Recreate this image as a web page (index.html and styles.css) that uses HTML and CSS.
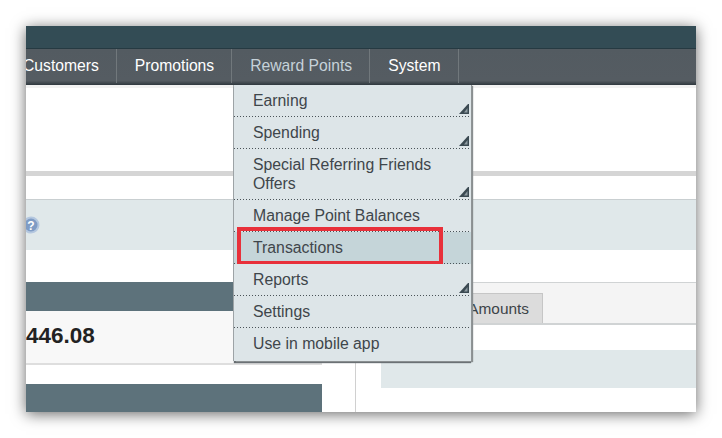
FILE: index.html
```html
<!DOCTYPE html>
<html lang="en">
<head>
    <meta charset="UTF-8">
    <meta name="viewport" content="width=device-width, initial-scale=1.0">
    <title>Reward Points</title>
    <link rel="stylesheet" href="styles.css">
</head>
<body>
    <div class="window">
        <div class="topbar"></div>
        <nav class="nav">
            <a class="nav-item first">Customers</a>
            <a class="nav-item">Promotions</a>
            <a class="nav-item active">Reward Points</a>
            <a class="nav-item">System</a>
        </nav>
        <div class="intro"></div>
        <div class="rule"></div>
        <div class="notice">
            <svg class="help" width="18" height="18" viewBox="0 0 18 18">
                <circle cx="9" cy="9" r="7.5" fill="#7f9cc5" stroke="#b4c7df" stroke-width="2"/>
                <text x="9" y="13.5" font-family="Liberation Sans" font-size="12" font-weight="700" fill="#fff" text-anchor="middle">?</text>
            </svg>
        </div>
        <div class="columns">
            <div class="col-left">
                <div class="col-head"></div>
                <div class="amount">446.08</div>
                <div class="col-head lower"></div>
            </div>
            <div class="col-right">
                <div class="tabs"><span class="tab">Amounts</span></div>
                <div class="tab-band"></div>
            </div>
        </div>
        <ul class="menu">
            <li>Earning
                <svg class="arrow" width="10" height="10" viewBox="0 0 10 10"><polygon points="0,10 9,0 10,0 10,10" fill="#3b4a52"/><polygon points="5,8.5 8.5,4 8.5,8.5" fill="#8e9ba1"/></svg>
            </li>
            <li>Spending
                <svg class="arrow" width="10" height="10" viewBox="0 0 10 10"><polygon points="0,10 9,0 10,0 10,10" fill="#3b4a52"/><polygon points="5,8.5 8.5,4 8.5,8.5" fill="#8e9ba1"/></svg>
            </li>
            <li>Special Referring Friends Offers
                <svg class="arrow" width="10" height="10" viewBox="0 0 10 10"><polygon points="0,10 9,0 10,0 10,10" fill="#3b4a52"/><polygon points="5,8.5 8.5,4 8.5,8.5" fill="#8e9ba1"/></svg>
            </li>
            <li>Manage Point Balances</li>
            <li class="hover">Transactions<span class="marker"></span></li>
            <li>Reports
                <svg class="arrow" width="10" height="10" viewBox="0 0 10 10"><polygon points="0,10 9,0 10,0 10,10" fill="#3b4a52"/><polygon points="5,8.5 8.5,4 8.5,8.5" fill="#8e9ba1"/></svg>
            </li>
            <li>Settings</li>
            <li class="last">Use in mobile app</li>
        </ul>
    </div>
</body>
</html>
```

FILE: styles.css
```css
html, body {
    margin: 0;
    padding: 0;
    background: #fff;
}
body {
    font-family: "Liberation Sans", Arial, sans-serif;
    height: 438px;
    overflow: hidden;
}
.window {
    position: relative;
    width: 670px;
    height: 386px;
    margin: 26px;
    overflow: hidden;
    background: #fff;
    display: flex;
    flex-direction: column;
    box-shadow: 0 2px 14px rgba(0, 0, 0, 0.6);
}
.topbar {
    height: 22px;
    flex: none;
    background: #334c55;
    border-bottom: 1px solid #263a42;
}
.nav {
    height: 36px;
    flex: none;
    display: flex;
    align-items: stretch;
    background: linear-gradient(#535b61 0, #555c62 88%, #2f383e 100%);
}
.nav-item {
    padding: 0 17px 0 18px;
    height: 34px;
    line-height: 33px;
    font-size: 15.7px;
    color: #fff;
    border-right: 1px solid #71787c;
}
.nav-item.first {
    margin-left: -3px;
    padding-left: 0;
}
.nav-item.active {
    color: #c6d2d9;
}
.intro {
    height: 86px;
    flex: none;
    border-top: 3px solid #f2f2f2;
    box-sizing: border-box;
}
.rule {
    height: 29px;
    flex: none;
    border-top: 5px solid #d5d5d5;
    border-bottom: 1px solid #c9cfd1;
    box-sizing: border-box;
}
.notice {
    height: 50px;
    flex: none;
    background: #e0e8ea;
    display: flex;
    align-items: center;
}
.help {
    margin-left: -4px;
}
.columns {
    margin-top: 32px;
    flex: 1;
    display: flex;
}
.col-left {
    width: 296px;
}
.col-head {
    height: 29px;
    background: #5d727b;
}
.amount {
    height: 52px;
    line-height: 50px;
    font-size: 22.5px;
    font-weight: 700;
    color: #222;
    background: #f8f8f8;
    border-bottom: 2px solid #dedede;
}
.col-head.lower {
    margin-top: 19px;
}
.col-right {
    margin-left: 33px;
    flex: 1;
    border-left: 1px solid #d0d0d0;
}
.tabs {
    height: 40px;
    background: #f4f4f4;
    border-top: 1px solid #d0d3d4;
    border-bottom: 2px solid #d0d3d4;
    display: flex;
    justify-content: flex-end;
    padding-right: 153px;
    align-items: flex-end;
}
.tab {
    height: 29px;
    line-height: 29px;
    font-size: 15.4px;
    color: #3c4448;
    background: #dcdcdc;
    border: 1px solid #c6c6c6;
    border-bottom: none;
    padding: 0 13px 0 40px;
}
.tab-band {
    height: 38px;
    margin: 25px 0 0 25px;
    background: #e0e8ea;
}
.menu {
    position: absolute;
    left: 208px;
    top: 59px;
    width: 237px;
    margin: 0;
    padding: 0;
    list-style: none;
    background: #dde5e8;
    font-size: 15.8px;
    line-height: 19px;
    color: #3f464b;
    box-shadow: 1px 0 0 #8f9496, 2px 1px 1px #8a8f91, 0 2px 1px #666c70, -1px 0 0 #a9afb1;
}
.menu li {
    position: relative;
    padding: 6px 24px 7px 19px;
    background-image: linear-gradient(90deg, #4a5358 1px, transparent 1px);
    background-size: 3px 1px;
    background-repeat: repeat-x;
    background-position: left bottom;
}
.menu li.last {
    background-image: none;
    padding-bottom: 8px;
}
.menu li.hover {
    background-color: #c5d5d9;
}
.arrow {
    position: absolute;
    right: 2px;
    bottom: 3px;
}
.marker {
    position: absolute;
    left: 3px;
    top: -5px;
    width: 198px;
    height: 30px;
    border: 4px solid #e8303a;
    border-bottom-width: 3px;
}
```
